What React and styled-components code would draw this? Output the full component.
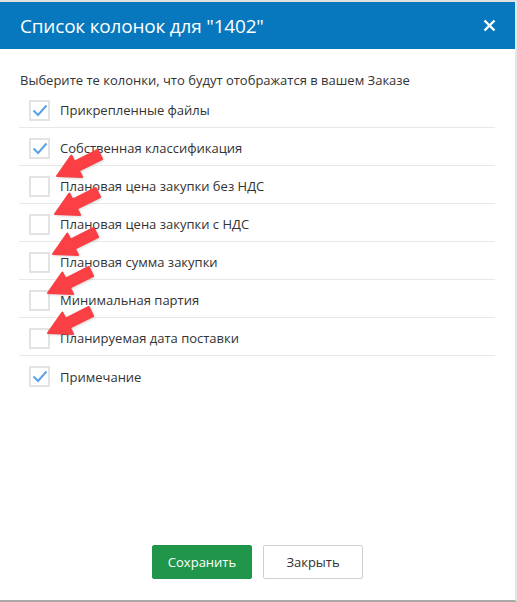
import React, { useState } from "react";
import styled, { createGlobalStyle } from "styled-components";

const GlobalStyle = createGlobalStyle`
  html, body {
    margin: 0;
    padding: 0;
    background: #fff;
  }
  body {
    font-family: "Open Sans", "Noto Sans", sans-serif;
    color: #333;
  }
  * {
    box-sizing: border-box;
  }
`;

const Modal = styled.div`
  width: 517px;
  height: 602px;
  display: flex;
  flex-direction: column;
  border-top: 2px solid #e2e2e2;
  border-right: 2px solid #e6e6e6;
  border-bottom: 2px solid #a9a9a9;
  background: #fff;
`;

const Header = styled.header`
  height: 47px;
  flex-shrink: 0;
  background: #0778be;
  display: flex;
  align-items: center;
  justify-content: space-between;
  padding: 0 18px 0 20px;
`;

const Title = styled.h4`
  margin: 0;
  color: #fff;
  font-size: 19px;
  font-weight: 400;
  letter-spacing: -0.2px;
`;

const CloseButton = styled.button`
  border: 0;
  background: none;
  padding: 0;
  width: 16px;
  height: 16px;
  display: flex;
  align-items: center;
  justify-content: center;
  cursor: pointer;
`;

const Body = styled.main`
  flex: 1;
  padding: 22px 20px 0 19px;
`;

const Intro = styled.p`
  margin: 0 0 1px 1px;
  font-size: 13px;
  line-height: 18px;
`;

const List = styled.section`
  position: relative;
`;

const Row = styled.label`
  height: 38px;
  display: flex;
  align-items: center;
  padding: 3px 0 0 10px;
  border-bottom: ${(p) => (p.last ? "none" : "1px solid #e8e8e8")};
  font-size: 13px;
  cursor: pointer;
`;

const Box = styled.span`
  width: 21px;
  height: 21px;
  border: 2px solid #e3e3e3;
  display: flex;
  align-items: center;
  justify-content: center;
  margin-right: 10px;
  flex-shrink: 0;
`;

const Arrow = styled.svg`
  position: absolute;
  width: 52px;
  height: 34px;
  pointer-events: none;
  filter: drop-shadow(1px 1px 1px rgba(0, 0, 0, 0.15));
`;

const Footer = styled.footer`
  display: flex;
  justify-content: center;
  gap: 11px;
  padding: 0 0 21px 0;
`;

const Button = styled.button`
  width: 100px;
  height: 34px;
  font-family: "Open Sans", "Noto Sans", sans-serif;
  font-size: 13px;
  border-radius: 2px;
  border: 1px solid ${(p) => (p.primary ? "#1d9447" : "#cfcfcf")};
  background: ${(p) => (p.primary ? "#1f9649" : "#fff")};
  color: ${(p) => (p.primary ? "#fff" : "#333")};
  cursor: pointer;
`;

const columns = [
  { name: "Прикрепленные файлы", checked: true },
  { name: "Собственная классификация", checked: true },
  { name: "Плановая цена закупки без НДС", checked: false },
  { name: "Плановая цена закупки с НДС", checked: false },
  { name: "Плановая сумма закупки", checked: false },
  { name: "Минимальная партия", checked: false },
  { name: "Планируемая дата поставки", checked: false },
  { name: "Примечание", checked: true },
];

// tips of the red pointer arrows, relative to the list
const arrows = [
  { x: 38, y: 86 },
  { x: 36, y: 124 },
  { x: 34, y: 164 },
  { x: 29, y: 203 },
  { x: 29, y: 243 },
];

const Check = () => (
  <svg width="16" height="13" viewBox="0 0 16 13">
    <path d="M1.5 6.5 L6 11 L14.5 1.5" fill="none" stroke="#5aa2e8" strokeWidth="2" />
  </svg>
);

const App = () => {
  const [items, setItems] = useState(columns);

  const toggle = (index) => {
    setItems(items.map((item, i) => (i === index ? { ...item, checked: !item.checked } : item)));
  };

  return (
    <>
      <GlobalStyle />
      <Modal>
        <Header>
          <Title>Список колонок для "1402"</Title>
          <CloseButton>
            <svg width="13" height="13" viewBox="0 0 13 13">
              <path d="M1.5 1.5 L11.5 11.5 M11.5 1.5 L1.5 11.5" stroke="#fff" strokeWidth="2.4" />
            </svg>
          </CloseButton>
        </Header>
        <Body>
          <Intro>Выберите те колонки, что будут отображатся в вашем Заказе</Intro>
          <List>
            {items.map((item, index) => (
              <Row key={index} last={index === items.length - 1} onClick={() => toggle(index)}>
                <Box>{item.checked && <Check />}</Box>
                {item.name}
              </Row>
            ))}
            {arrows.map((a, index) => (
              <Arrow key={index} viewBox="0 0 52 34" style={{ left: a.x - 2, top: a.y - 28 }}>
                <polygon
                  points="2,28 16.3,7.5 19.5,13.7 42.7,2 47.1,11 23.9,22.7 27.1,28.9"
                  fill="#fa3f45"
                  stroke="#fa3f45"
                  strokeWidth="2"
                  strokeLinejoin="round"
                />
              </Arrow>
            ))}
          </List>
        </Body>
        <Footer>
          <Button primary>Сохранить</Button>
          <Button>Закрыть</Button>
        </Footer>
      </Modal>
    </>
  );
};

export default App;
